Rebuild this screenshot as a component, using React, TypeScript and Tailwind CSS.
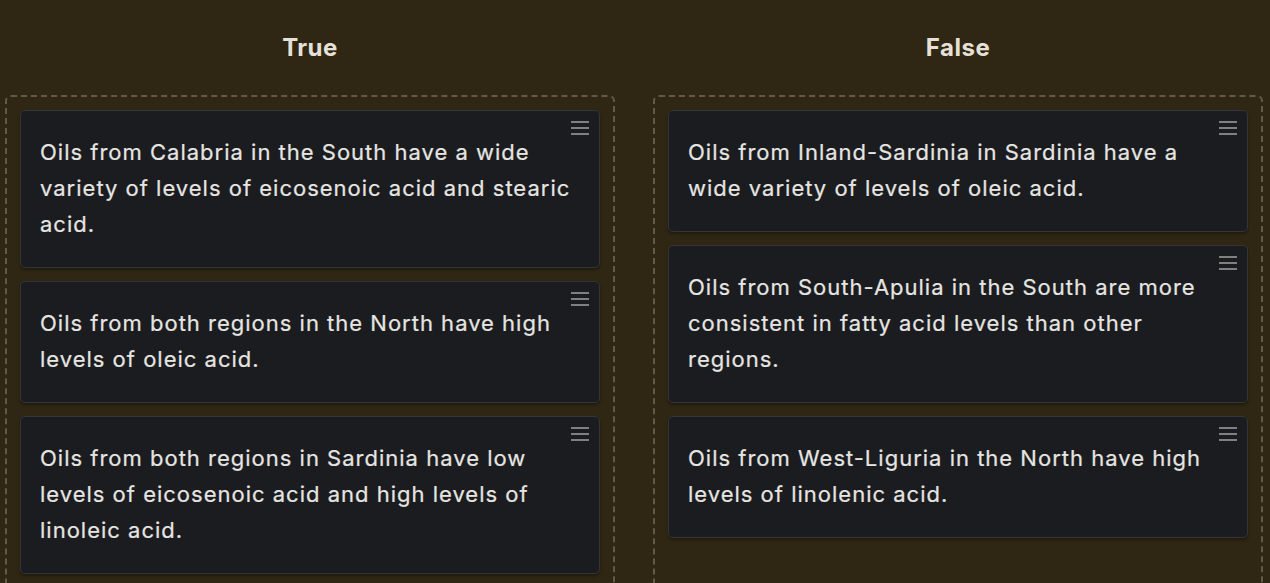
const columns = [
  {
    title: "True",
    items: [
      "Oils from Calabria in the South have a wide variety of levels of eicosenoic acid and stearic acid.",
      "Oils from both regions in the North have high levels of oleic acid.",
      "Oils from both regions in Sardinia have low levels of eicosenoic acid and high levels of linoleic acid.",
    ],
  },
  {
    title: "False",
    items: [
      "Oils from Inland-Sardinia in Sardinia have a wide variety of levels of oleic acid.",
      "Oils from South-Apulia in the South are more consistent in fatty acid levels than other regions.",
      "Oils from West-Liguria in the North have high levels of linolenic acid.",
    ],
  },
];

const Handle = () => (
  <div className="absolute right-[10px] top-[10px] flex w-[18px] flex-col gap-[4px]">
    <span className="h-[2px] w-full bg-[#808080]" />
    <span className="h-[2px] w-full bg-[#808080]" />
    <span className="h-[2px] w-full bg-[#808080]" />
  </div>
);

const Card = ({ text }: { text: string }) => (
  <div className="relative rounded-[5px] border border-[#34353a] bg-[#1b1c1f] pb-[25px] pl-[19px] pr-[20px] pt-[23px] shadow-[0_2px_3px_rgba(0,0,0,0.35)]">
    <Handle />
    <p className="text-[22px] leading-[36px] tracking-[1px] text-[#e6e5e2] [-webkit-text-stroke:0.2px_#e6e5e2]">
      {text}
    </p>
  </div>
);

export default function App() {
  return (
    <div
      className="h-[583px] overflow-hidden bg-[#2f2713] pl-[5px] pr-[7px]"
      style={{ fontFamily: "Inter, 'Noto Sans', sans-serif" }}
    >
      <div className="grid grid-cols-2 gap-[38px]">
        {columns.map((col) => (
          <div key={col.title} className="flex flex-col">
            <div className="flex h-[95px] items-center justify-center">
              <h2 className="text-[24px] font-bold tracking-[0.5px] text-[#e6e1d8]">{col.title}</h2>
            </div>
            <div className="flex h-[500px] flex-col gap-[13px] rounded-[6px] border-2 border-dashed border-[#635a45] p-[13px]">
              {col.items.map((t) => (
                <Card key={t} text={t} />
              ))}
            </div>
          </div>
        ))}
      </div>
    </div>
  );
}
